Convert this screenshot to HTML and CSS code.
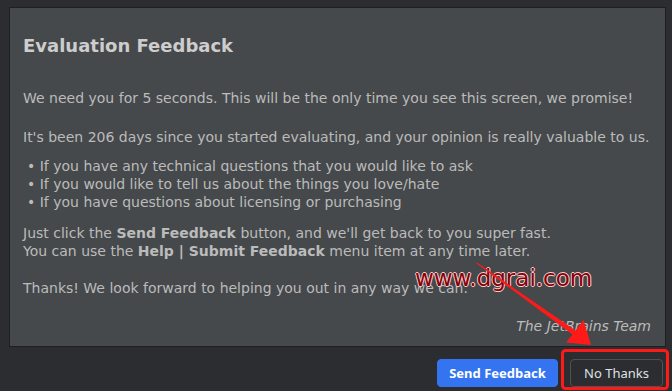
FILE: index.html
```html
<!DOCTYPE html>
<html lang="en">
<head>
<meta charset="utf-8">
<title>Evaluation Feedback</title>
<link rel="stylesheet" href="styles.css">
</head>
<body>
<div class="dialog">
  <div class="panel">
    <h1 class="title">Evaluation Feedback</h1>
    <p class="p-intro">We need you for 5 seconds. This will be the only time you see this screen, we promise!</p>
    <p class="p-days">It's been 206 days since you started evaluating, and your opinion is really valuable to us.</p>
    <ul class="list">
      <li>If you have any technical questions that you would like to ask</li>
      <li>If you would like to tell us about the things you love/hate</li>
      <li>If you have questions about licensing or purchasing</li>
    </ul>
    <p class="p-click">Just click the <b>Send Feedback</b> button, and we'll get back to you super fast.<br>You can use the <b>Help | Submit Feedback</b> menu item at any time later.</p>
    <p class="p-thanks">Thanks! We look forward to helping you out in any way we can.</p>
    <p class="sign">The JetBrains Team</p>
  </div>
  <div class="footer">
    <button class="btn btn-primary">Send Feedback</button>
    <button class="btn btn-secondary">No Thanks</button>
  </div>
</div>
<div class="watermark">www.dgrai.com</div>
<svg class="annot" width="672" height="391" viewBox="0 0 672 391">
  <polygon points="477,262.5 575.5,330.5 583.5,320 591,345 566,342.5 572.5,334.5 476.5,263.5" fill="#ff1a1a"/>
  <rect x="562.5" y="350.5" width="105" height="38" rx="3" fill="none" stroke="#ff1a1a" stroke-width="3"/>
</svg>
</body>
</html>
```
FILE: styles.css
```css
html, body {
  margin: 0;
  padding: 0;
}
body {
  width: 672px;
  height: 391px;
  background: #2b2d30;
  overflow: hidden;
  position: relative;
  font-family: "DejaVu Sans", Verdana, sans-serif;
  font-size: 14px;
  line-height: 18px;
  color: #bbbbbb;
}
.dialog {
  padding: 7px 6px 0 9px;
}
.panel {
  background: #46494b;
  border: 1px solid #1e1f22;
  padding: 28px 14px 0 13px;
  height: 310px;
}
.title {
  margin: 0 0 33px;
  font-size: 18px;
  line-height: 20px;
  font-weight: bold;
  color: #cdcdcd;
}
p {
  margin: 0;
}
.p-days {
  margin-top: 21px;
}
.list {
  list-style: none;
  margin: 11px 0 0 4px;
  padding: 0;
}
.list li::before {
  content: "\2022\00a0";
}
.p-click {
  margin-top: 13px;
}
.p-thanks {
  margin-top: 19px;
}
.sign {
  margin-top: 20px;
  text-align: right;
  font-style: italic;
}
b {
  font-weight: bold;
}
.footer {
  display: flex;
  justify-content: flex-end;
  gap: 12px;
  padding: 12px 3px 0 0;
}
.btn {
  height: 28px;
  border-radius: 4px;
  font-family: "Noto Sans", "Open Sans", sans-serif;
  font-size: 13px;
  padding: 0;
  box-sizing: border-box;
}
.btn-primary {
  width: 121px;
  background: #3574f0;
  border: 1px solid #3574f0;
  color: #ffffff;
  font-weight: bold;
}
.btn-secondary {
  width: 93px;
  background: #2b2d30;
  border: 1px solid #4e5157;
  color: #dfe1e5;
}
.watermark {
  position: absolute;
  left: 415px;
  top: 264px;
  font-family: "DejaVu Sans", sans-serif;
  font-size: 23px;
  line-height: 28px;
  color: #8a0008;
  text-shadow: 1px 0 0 #f4d0d0, -1px 0 0 #f4d0d0, 0 1px 0 #f4d0d0, 0 -1px 0 #f4d0d0;
}
.annot {
  position: absolute;
  left: 0;
  top: 0;
  pointer-events: none;
}
```
